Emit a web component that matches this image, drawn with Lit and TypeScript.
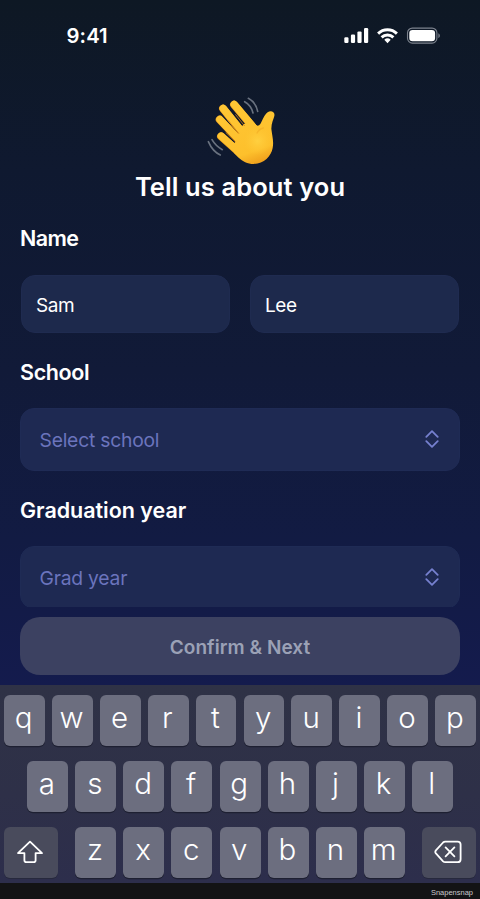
import { LitElement, html, css, svg } from "lit";
import { customElement } from "lit/decorators.js";

@customElement("status-bar")
class StatusBar extends LitElement {
  static styles = css`
    :host { display: flex; justify-content: space-between; height: 72px; box-sizing: border-box; padding: 24px 38px 0 66.5px; }
    .time { font-size: 20.3px; line-height: 24px; font-weight: 580; letter-spacing: 0.1px; }
    .icons { display: block; width: 98px; height: 24px; }
  `;
  render() {
    return html`
      <span class="time">9:41</span>
      <svg class="icons" viewBox="0 0 98 24" fill="#fff">
        <rect x="0.3" y="13.2" width="4.2" height="5.8" rx="1.2" />
        <rect x="6.9" y="10.6" width="4.2" height="8.4" rx="1.2" />
        <rect x="13.4" y="7.4" width="4.2" height="11.6" rx="1.2" />
        <rect x="20" y="4" width="4.2" height="15" rx="1.2" />
        <g fill="none" stroke="#fff" stroke-width="2.9">
          <path d="M34.1 9.6a13.4 13.4 0 0 1 18.8 0" />
          <path d="M37.6 13.4a8.4 8.4 0 0 1 11.8 0" />
        </g>
        <path d="M43.5 19.2l-3.2-3.4a4.7 4.7 0 0 1 6.4 0z" />
        <rect x="63.5" y="4.1" width="29.4" height="15" rx="4.8" fill="none" stroke="#7d838e" stroke-width="1.1" />
        <rect x="65.3" y="5.9" width="25.8" height="11.4" rx="3.2" />
        <path d="M94.4 9.2c1.9.8 1.9 4 0 4.8z" fill="#7d838e" />
      </svg>
    `;
  }
}

@customElement("waving-hand")
class WavingHand extends LitElement {
  static styles = css`
    :host { display: block; width: 90px; height: 85px; }
    svg { display: block; }
  `;
  render() {
    const fingers = [
      "M117 59L174 127",
      "M84 71L150 153",
      "M74 104L142 176",
      "M78 154L136 206",
    ];
    return html`
      <svg width="90" height="85" viewBox="0 0 270 255">
        <defs>
          <linearGradient id="skin" gradientUnits="userSpaceOnUse" x1="110" y1="50" x2="180" y2="240">
            <stop offset="0" stop-color="#ffc735" />
            <stop offset="0.8" stop-color="#fdc02c" />
            <stop offset="1" stop-color="#ef9f1c" />
          </linearGradient>
          <radialGradient id="glow" gradientUnits="userSpaceOnUse" cx="188" cy="168" r="42">
            <stop offset="0" stop-color="#ffd040" />
            <stop offset="1" stop-color="#ffc735" stop-opacity="0" />
          </radialGradient>
        </defs>
        ${fingers.map((d) => svg`
          <path d=${d} fill="none" stroke="#e2971c" stroke-width="23.5" stroke-linecap="round" />
          <path d=${d} transform="translate(0.8 -0.8)" fill="none" stroke="url(#skin)" stroke-width="22" stroke-linecap="round" />
        `).reverse()}
        <path fill="url(#skin)" d="M145 118L171 108L184 121Q191 124 196 117C204 103 208 89 218 82C227 75 241 80 238 93C236 102 229 114 229 131C231 150 237 168 233 189C229 213 206 237 176 237C157 237 143 229 131 218L118 205L112 189L120 171L130 143Z" />
        <circle cx="188" cy="168" r="42" fill="url(#glow)" />
        <g fill="none" stroke="#cf7f12" stroke-width="2.6" stroke-linecap="round">
          <path d="M122 89L148 122" />
          <path d="M100 107L131 145" />
          <path d="M93 143L121 170" />
        </g>
        <path d="M205 129Q192 132 186 144" fill="none" stroke="#f0aa22" stroke-width="4" stroke-linecap="round" opacity="0.55" />
        <g fill="none" stroke="#69717f" stroke-width="5" stroke-linecap="round">
          <path d="M149 50Q169 61 174 84" />
          <path d="M160 40Q183 53 188 79" />
          <path d="M51 164Q62 183 82 194" />
          <path d="M40 170Q53 200 76 210" />
        </g>
      </svg>
    `;
  }
}

@customElement("select-field")
class SelectField extends LitElement {
  static styles = css`
    :host {
      display: flex; align-items: center; justify-content: space-between; flex: none;
      height: 62.5px; box-sizing: border-box; padding: 2px 20.5px 0 18.5px; border-radius: 14px;
      background: #1e2952; border: 1px solid #1f2b55; color: #6b74bd; font-size: 19.3px; letter-spacing: -0.22px;
    }
    svg { display: block; margin-top: -2px; }
  `;
  render() {
    return html`
      <slot></slot>
      <svg width="14" height="18" viewBox="0 0 14 18" fill="none" stroke="#7680cf" stroke-width="1.8" stroke-linecap="round" stroke-linejoin="round">
        <path d="M1.3 6.8L7 1.2l5.7 5.6M1.3 11.2L7 16.8l5.7-5.6" />
      </svg>
    `;
  }
}

@customElement("key-board")
class KeyBoard extends LitElement {
  static styles = css`
    :host {
      display: flex; flex-direction: column; gap: 15px; flex: none; height: 198px;
      box-sizing: border-box; padding: 10px 4px 0; background: linear-gradient(#2f3246, #2e3048 55%, #2d2e4c);
    }
    .row { display: flex; justify-content: center; gap: 7.1px; }
    .last { justify-content: space-between; }
    .letters { display: flex; gap: 7.1px; }
    .key {
      display: flex; justify-content: center; width: 41px; height: 51px; box-sizing: border-box; padding-right: 1.5px; border-radius: 6px;
      background: #6c6e7f; box-shadow: 0 1.3px 0 #1e2032; font-size: 29.5px; line-height: 45px; font-weight: 340;
    }
    .wide { width: 54px; align-items: center; padding-bottom: 1px; background: #494b5c; box-shadow: 0 1px 0 #27293d; }
  `;
  private keys(letters: string) {
    return [...letters].map((k) => html`<span class="key">${k}</span>`);
  }
  render() {
    return html`
      <div class="row">${this.keys("qwertyuiop")}</div>
      <div class="row">${this.keys("asdfghjkl")}</div>
      <div class="row last">
        <span class="key wide">
          <svg width="28" height="24" viewBox="0 0 28 24" fill="none" stroke="#fff" stroke-width="1.8" stroke-linejoin="round">
            <path d="M14 1.6L26 13.1H19.6V20.3Q19.6 22.2 17.7 22.2H10.3Q8.4 22.2 8.4 20.3V13.1H2Z" />
          </svg>
        </span>
        <div class="letters">${this.keys("zxcvbnm")}</div>
        <span class="key wide">
          <svg width="28" height="24" viewBox="0 0 28 24" fill="none" stroke="#fff" stroke-width="1.8" stroke-linejoin="round" stroke-linecap="round">
            <path d="M11.2 1.6H23.6Q26.6 1.6 26.6 4.6V19.2Q26.6 22.2 23.6 22.2H11.2Q10 22.2 9.1 21.3L1.9 13.4Q.7 11.9 1.9 10.4L9.1 2.5Q10 1.6 11.2 1.6Z" />
            <path d="M11.6 7.4L20.4 16.4M20.4 7.4L11.6 16.4" />
          </svg>
        </span>
      </div>
    `;
  }
}

@customElement("app-root")
class AppRoot extends LitElement {
  static styles = css`
    :host {
      display: flex; flex-direction: column; width: 480px; height: 899px; overflow: hidden; color: #fff;
      font-family: Inter, "Liberation Sans", sans-serif; background: #131315;
    }
    .screen {
      display: flex; flex-direction: column; height: 685px; flex: none;
      background: linear-gradient(#0e1824 0, #0f1930 170px, #111a38 370px, #121b43 540px, #141b4d 685px);
    }
    .body { display: flex; flex-direction: column; height: 535px; padding: 13px 20px 0; box-sizing: border-box; overflow: hidden; border-radius: 0 0 28px 28px; }
    waving-hand { align-self: center; flex: none; margin-bottom: 3px; }
    h1 { margin: 0; height: 28px; line-height: 28px; font-size: 25.5px; font-weight: 600; text-align: center; letter-spacing: 0.1px; }
    h2 { margin: 0; height: 28px; line-height: 28px; flex: none; font-size: 21.5px; font-weight: 600; }
    .name { margin-top: 23px; letter-spacing: -0.6px; }
    .school { margin-top: 24.5px; letter-spacing: -0.35px; }
    .grad { margin-top: 25px; letter-spacing: -0.03px; }
    .names { display: flex; gap: 20px; margin: 23px 1px 0; flex: none; }
    .input {
      flex: 1; display: flex; align-items: center; height: 58px; box-sizing: border-box; padding: 2px 14px 0;
      border: 1px solid #1f2b50; border-radius: 14px; background: #1d294c; font-size: 19px; letter-spacing: -0.4px;
    }
    select-field { margin-top: 22.5px; }
    .confirm {
      flex: none; margin: 10px 20px 0; height: 58px; border: 0; padding: 2px 0 0; border-radius: 20px; background: #3c4161;
      color: #9ba1b6; font: 600 19px Inter, sans-serif; letter-spacing: 0.06px;
    }
    .footer { flex: 1; display: flex; align-items: center; justify-content: flex-end; padding: 2px 7px 0; font: 7.5px "Liberation Sans", sans-serif; color: #c9c9cc; }
  `;
  render() {
    return html`
      <div class="screen">
        <status-bar></status-bar>
        <div class="body">
          <waving-hand></waving-hand>
          <h1>Tell us about you</h1>
          <h2 class="name">Name</h2>
          <div class="names">
            <div class="input">Sam</div>
            <div class="input">Lee</div>
          </div>
          <h2 class="school">School</h2>
          <select-field>Select school</select-field>
          <h2 class="grad">Graduation year</h2>
          <select-field>Grad year</select-field>
        </div>
        <button class="confirm">Confirm &amp; Next</button>
      </div>
      <key-board></key-board>
      <div class="footer">Snapensnap</div>
    `;
  }
}
